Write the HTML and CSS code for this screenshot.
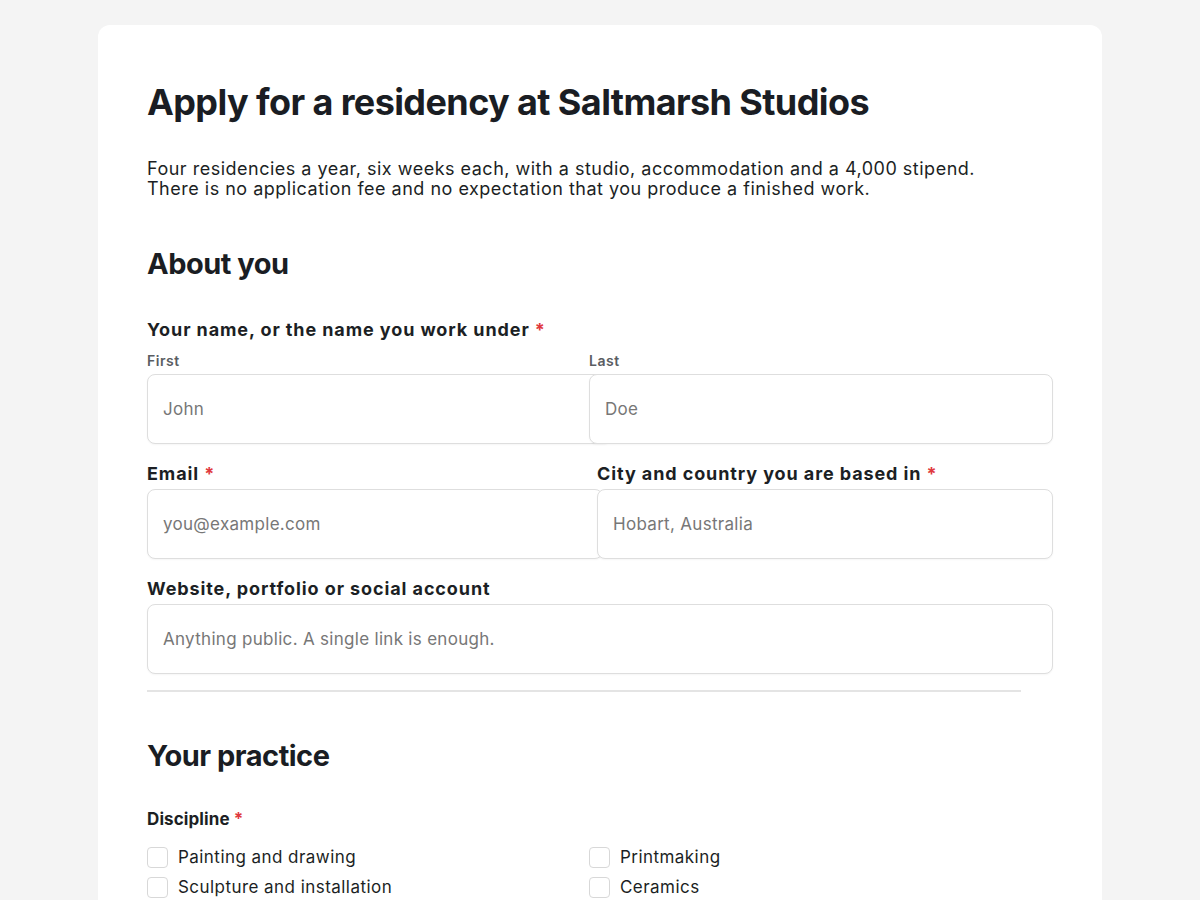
FILE: index.html
```html
<!DOCTYPE html>
<html lang="en">
<head>
    <meta charset="UTF-8">
    <meta name="viewport" content="width=device-width, initial-scale=1.0">
    <title>Apply for a residency - Saltmarsh Studios</title>
    <link rel="stylesheet" href="styles.css">
</head>
<body>
    <main class="card">
        <h1>Apply for a residency at Saltmarsh Studios</h1>
        <p class="intro">Four residencies a year, six weeks each, with a studio, accommodation and a 4,000 stipend.<br>There is no application fee and no expectation that you produce a finished work.</p>

        <section class="section">
            <h2>About you</h2>

            <div class="field">
                <div class="label label-group">Your name, or the name you work under <span class="req">*</span></div>
                <div class="row row-name">
                    <div>
                        <label class="sub" for="first">First</label>
                        <input id="first" type="text" placeholder="John">
                    </div>
                    <div>
                        <label class="sub" for="last">Last</label>
                        <input id="last" type="text" placeholder="Doe">
                    </div>
                </div>
            </div>

            <div class="row row-pair">
                <div class="field">
                    <label class="label" for="email">Email <span class="req">*</span></label>
                    <input id="email" type="email" placeholder="you@example.com">
                </div>
                <div class="field">
                    <label class="label" for="city">City and country you are based in <span class="req">*</span></label>
                    <input id="city" type="text" placeholder="Hobart, Australia">
                </div>
            </div>

            <div class="field">
                <label class="label" for="site">Website, portfolio or social account</label>
                <input id="site" type="text" placeholder="Anything public. A single link is enough.">
            </div>
        </section>

        <hr class="divider">

        <section class="section">
            <h2>Your practice</h2>
            <div class="field">
                <div class="label label-sm">Discipline <span class="req">*</span></div>
                <div class="checks">
                    <label class="check"><input type="checkbox"><span>Painting and drawing</span></label>
                    <label class="check"><input type="checkbox"><span>Printmaking</span></label>
                    <label class="check"><input type="checkbox"><span>Sculpture and installation</span></label>
                    <label class="check"><input type="checkbox"><span>Ceramics</span></label>
                </div>
            </div>
        </section>
    </main>
</body>
</html>
```

FILE: styles.css
```css
body {
    margin: 0;
    padding: 25px 0 0;
    background: #f4f4f4;
    font-family: Inter, 'Liberation Sans', sans-serif;
    color: #1c1f24;
}
.card {
    width: 874px;
    margin: 0 auto;
    background: #fff;
    border-radius: 12px;
    padding: 55px 81px 40px 49px;
}
h1 {
    font-size: 36px;
    font-weight: 700;
    letter-spacing: -0.6px;
    line-height: 44px;
    margin: 0 0 35px;
    color: #1a1d23;
}
.intro {
    font-size: 18px;
    letter-spacing: 0.5px;
    line-height: 20px;
    margin: 0 0 47px;
    color: #1c1f24;
}
h2 {
    font-size: 29px;
    font-weight: 700;
    letter-spacing: -0.5px;
    line-height: 36px;
    margin: 0 0 36px;
    color: #1a1d23;
}
.field {
    margin-bottom: 18px;
}
.label {
    display: block;
    font-size: 18px;
    font-weight: 700;
    letter-spacing: 0.9px;
    line-height: 24px;
    margin-bottom: 3px;
}
.label-group {
    margin-bottom: 10px;
}
.label-sm {
    font-size: 17px;
    letter-spacing: 0.1px;
    line-height: 18px;
    margin-bottom: 18px;
}
.req {
    color: #e0393e;
}
.sub {
    display: block;
    font-size: 14px;
    font-weight: 600;
    letter-spacing: 0.5px;
    color: #5a5d62;
    line-height: 18px;
    margin-bottom: 4px;
}
.row {
    display: grid;
    grid-template-columns: 1fr 1fr;
}
.row-name {
    column-gap: 10px;
}
.row-pair {
    column-gap: 26px;
}
input[type="text"],
input[type="email"] {
    display: block;
    box-sizing: content-box;
    width: 100%;
    height: 68px;
    padding: 0 15px;
    border: 1px solid #dedede;
    border-radius: 8px;
    background: #fff;
    font-family: inherit;
    font-size: 17px;
    letter-spacing: 0.3px;
    color: #1c1f24;
    box-shadow: 0 1px 2px rgba(0,0,0,0.04);
    position: relative;
}
input::placeholder {
    color: #777;
}
.row > div:last-child input {
    z-index: 1;
}
.divider {
    border: none;
    border-top: 2px solid #e4e4e4;
    margin: -2px 0 46px;
}
.checks {
    display: grid;
    grid-template-columns: 1fr 1fr;
    column-gap: 10px;
    row-gap: 8px;
}
.check {
    display: flex;
    align-items: center;
    gap: 10px;
    font-size: 17px;
    letter-spacing: 0.45px;
    line-height: 22px;
}
.check input {
    appearance: none;
    margin: 0;
    width: 21px;
    height: 21px;
    border: 1px solid #d8d8d8;
    border-radius: 4px;
    background: #fff;
}
```
